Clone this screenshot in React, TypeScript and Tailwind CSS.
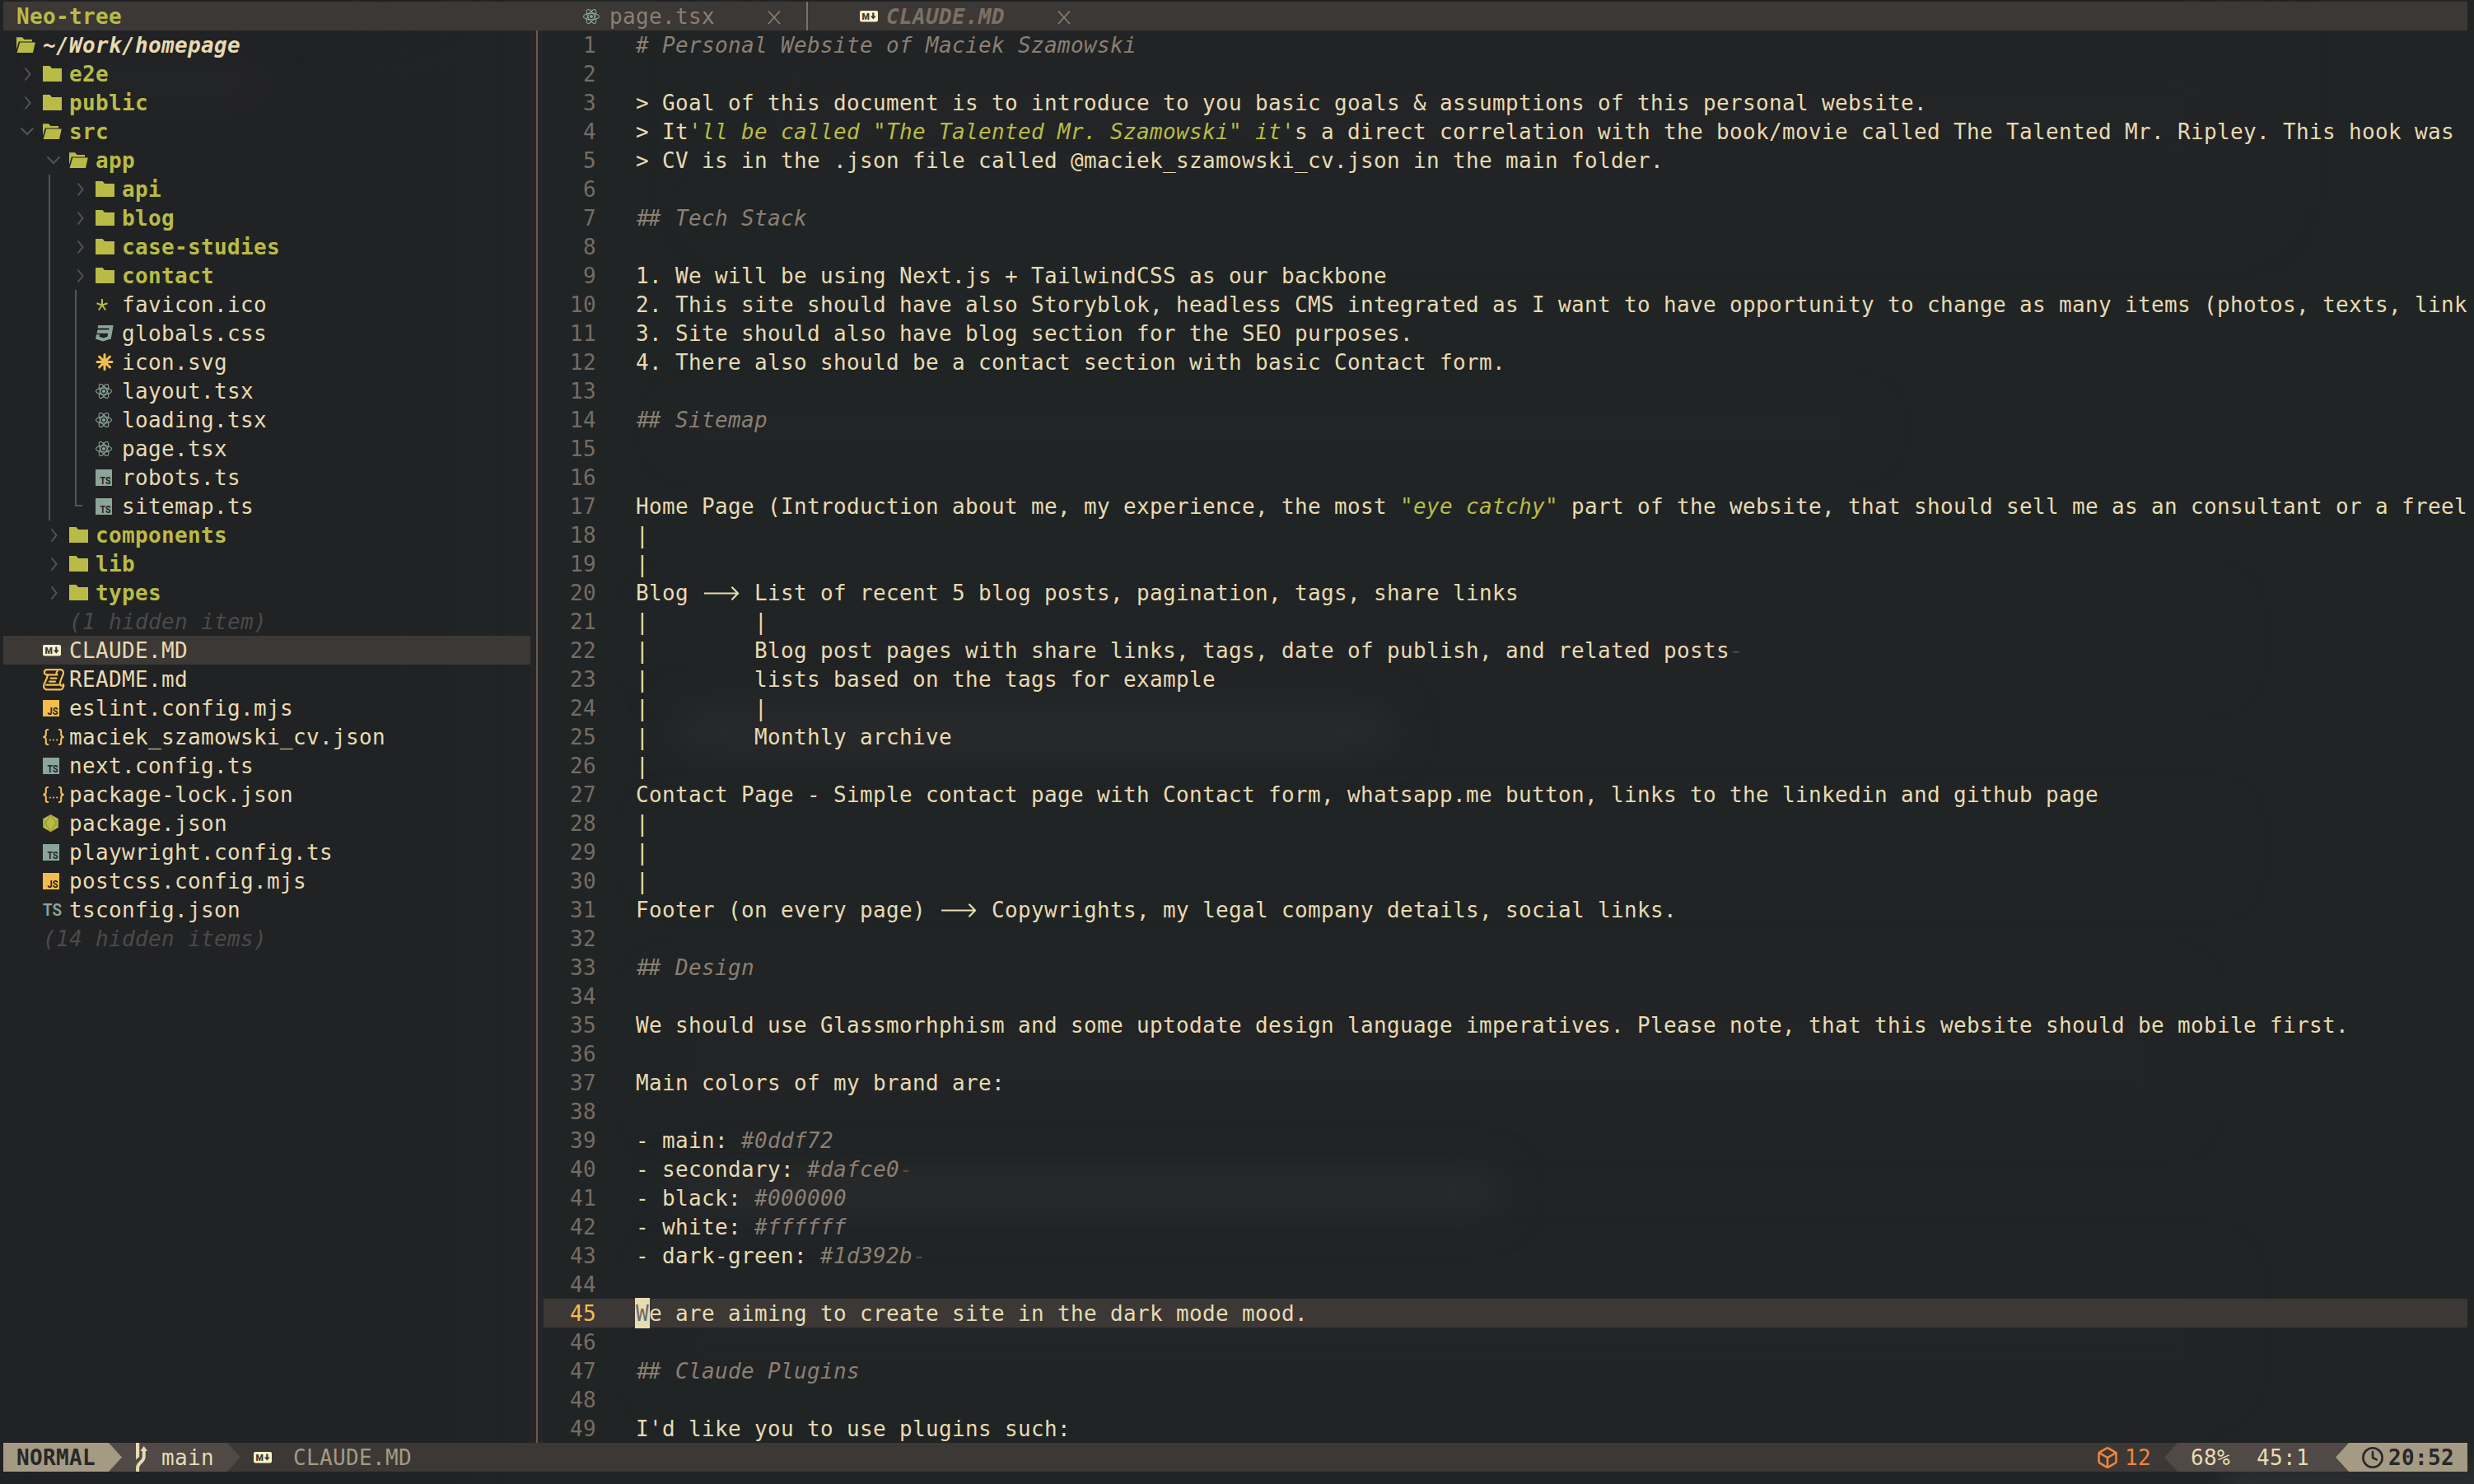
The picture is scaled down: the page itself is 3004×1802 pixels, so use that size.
import type { ReactNode } from 'react'
import { Box, Clock } from 'lucide-react'

// Every icon is drawn in a 32x35 frame: two terminal cells wide, one row high
function Glyph({ className = '', children }: { className?: string; children: ReactNode }) {
  return (
    <svg viewBox="0 0 32 35" className={`h-[35px] w-8 shrink-0 ${className}`} fill="currentColor">
      {children}
    </svg>
  )
}

function Folder() {
  return (
    <Glyph className="text-[#b9bb46]">
      <path d="M0 8h8.5l2.5 3h12v16H0z" />
    </Glyph>
  )
}

function FolderOpen() {
  return (
    <Glyph className="text-[#b9bb46]">
      <path d="M0 8.2h7l2.6 2.8h9.4v2.4H2.8L0 23z" />
      <path d="M4.2 14.6h18.6L20 27H0.6z" />
    </Glyph>
  )
}

function ChevronRight() {
  return (
    <Glyph className="text-[#555454]">
      <path d="M10.5 10.5l6 7.5-6 7.5" fill="none" stroke="currentColor" strokeWidth="2" />
    </Glyph>
  )
}

function ChevronDown() {
  return (
    <Glyph className="text-[#555454]">
      <path d="M5.5 13.5l7.5 7.5 7.5-7.5" fill="none" stroke="currentColor" strokeWidth="2" />
    </Glyph>
  )
}

function ReactIcon() {
  return (
    <Glyph className="text-[#8ba598]">
      <g fill="none" stroke="currentColor" strokeWidth="1.1">
        <ellipse cx="10" cy="18" rx="9.5" ry="3.9" />
        <ellipse cx="10" cy="18" rx="9.5" ry="3.9" transform="rotate(60 10 18)" />
        <ellipse cx="10" cy="18" rx="9.5" ry="3.9" transform="rotate(120 10 18)" />
      </g>
      <circle cx="10" cy="18" r="2" />
    </Glyph>
  )
}

function SquareIcon({ label, className }: { label: string; className: string }) {
  return (
    <Glyph className={className}>
      <rect x="0" y="8" width="20" height="20" />
      <text x="5.5" y="26.3" textLength="13" lengthAdjust="spacingAndGlyphs" fill="#212224" className="font-['Roboto',sans-serif] text-[12.5px] font-bold tracking-normal">
        {label}
      </text>
    </Glyph>
  )
}

function MarkdownIcon() {
  return (
    <Glyph className="text-[#fbf0c9]">
      <rect x="0" y="11" width="22" height="13.4" rx="1.8" />
      <text x="2.6" y="21.8" textLength="9.4" lengthAdjust="spacingAndGlyphs" fill="#3c3836" className="font-['Roboto',sans-serif] text-[11.5px] font-black tracking-normal">
        M
      </text>
      <path d="M15.2 13.6h2.2v4h2.4l-3.5 4-3.5-4h2.4z" fill="#3c3836" />
    </Glyph>
  )
}

function ScrollIcon() {
  return (
    <Glyph className="text-[#f2bd4f]">
      <g fill="none" stroke="currentColor" strokeWidth="2.2" strokeLinecap="round" strokeLinejoin="round">
        <path d="M4.5 12.4a3.2 3.2 0 0 1 0-6.3h17.3c4 1 3.4 4.6 2.4 6.9-2.2 5-3.9 8.3-3.2 11.4 1 1.9 3.4 1.3 4-.4.9 3-1 6.2-3.6 6.4H4.2c-3.6-.9-3.5-4.5-2.4-7.2 1.7-4 4.1-7.4 4-10.8z" />
        <path d="M5.5 12.4h12c-1.5-1.5-1.2-3.5.3-4.5M4 24.6h15" />
        <path d="M9.5 16.6h7M8 20.6h7" />
      </g>
    </Glyph>
  )
}

function JsonIcon() {
  return (
    <Glyph className="text-[#f2bd4f]">
      <g fill="none" stroke="currentColor" strokeWidth="2.1">
        <path d="M7 9H5.8C4.2 9 3.8 10 3.8 11.2v3.6C3.8 17 2.6 18 .3 18c2.3 0 3.5 1 3.5 3.2v3.6c0 1.2.4 2.2 2 2.2H7" />
        <path d="M19 9h1.2c1.6 0 2 1 2 2.2v3.6c0 2.2 1.2 3.2 3.5 3.2-2.3 0-3.5 1-3.5 3.2v3.6c0 1.2-.4 2.2-2 2.2H19" />
      </g>
      <circle cx="8.8" cy="21.5" r="1.1" />
      <circle cx="13" cy="21.5" r="1.1" />
      <circle cx="17.2" cy="21.5" r="1.1" />
    </Glyph>
  )
}

function NodeIcon() {
  return (
    <Glyph className="text-[#b9bb46]">
      <path d="M9.5 7l9.3 5.3v10.5L9.5 28.2.2 22.8V12.3z" />
      <path d="M9.5 7L2.5 17.5l7 10.7 7-10.7zM.2 12.3l9.3 15.9M18.8 12.3L9.5 28.2M.2 22.8L9.5 7l9.3 15.8" fill="none" stroke="#8c8f35" strokeWidth=".7" />
    </Glyph>
  )
}

function SunIcon() {
  return (
    <Glyph className="text-[#f2bd4f]">
      <g stroke="currentColor" strokeWidth="3" strokeLinecap="round">
        <path d="M11 8.5v18M2 17.5h18M4.5 11l13 13M17.5 11l-13 13" />
      </g>
      <circle cx="11" cy="17.5" r="4.5" />
    </Glyph>
  )
}

function StarIcon() {
  return (
    <Glyph className="text-[#b9bb46]">
      <path d="M8 11v7.5M8 18.5l-6.5-2.3M8 18.5l6.5-2.3M8 18.5l-4.2 6M8 18.5l4.2 6" fill="none" stroke="currentColor" strokeWidth="2" />
    </Glyph>
  )
}

function CssIcon() {
  return (
    <Glyph className="text-[#8ba598]">
      <path d="M3.2 8h18.5l-3 16.4L9 27.6 0 24.4l1-5.2h4l-.5 2.6 5 1.8 5-1.8.8-4H1.6l.8-4.2h13.8l.3-2H2.5z" />
    </Glyph>
  )
}

function TsTextIcon() {
  return (
    <Glyph className="text-[#8ba598]">
      <text x="0" y="25" textLength="23" lengthAdjust="spacingAndGlyphs" className="font-['Roboto',sans-serif] text-[20px] font-semibold tracking-normal">
        TS
      </text>
    </Glyph>
  )
}

const icons: Record<string, ReactNode> = {
  ico: <StarIcon />,
  css: <CssIcon />,
  svg: <SunIcon />,
  react: <ReactIcon />,
  ts: <SquareIcon label="TS" className="text-[#8ba598]" />,
  js: <SquareIcon label="JS" className="text-[#f2bd4f]" />,
  md: <MarkdownIcon />,
  readme: <ScrollIcon />,
  json: <JsonIcon />,
  node: <NodeIcon />,
  tstext: <TsTextIcon />,
}

type Node = {
  name: string
  depth: number
  kind: 'dir' | 'open' | 'file' | 'hidden'
  icon?: string
  guides?: ('line' | 'end')[]
  selected?: boolean
}

const tree: Node[] = [
  { name: 'e2e', depth: 0, kind: 'dir' },
  { name: 'public', depth: 0, kind: 'dir' },
  { name: 'src', depth: 0, kind: 'open' },
  { name: 'app', depth: 1, kind: 'open' },
  { name: 'api', depth: 2, kind: 'dir', guides: ['line'] },
  { name: 'blog', depth: 2, kind: 'dir', guides: ['line'] },
  { name: 'case-studies', depth: 2, kind: 'dir', guides: ['line'] },
  { name: 'contact', depth: 2, kind: 'dir', guides: ['line'] },
  { name: 'favicon.ico', depth: 2, kind: 'file', icon: 'ico', guides: ['line', 'line'] },
  { name: 'globals.css', depth: 2, kind: 'file', icon: 'css', guides: ['line', 'line'] },
  { name: 'icon.svg', depth: 2, kind: 'file', icon: 'svg', guides: ['line', 'line'] },
  { name: 'layout.tsx', depth: 2, kind: 'file', icon: 'react', guides: ['line', 'line'] },
  { name: 'loading.tsx', depth: 2, kind: 'file', icon: 'react', guides: ['line', 'line'] },
  { name: 'page.tsx', depth: 2, kind: 'file', icon: 'react', guides: ['line', 'line'] },
  { name: 'robots.ts', depth: 2, kind: 'file', icon: 'ts', guides: ['line', 'line'] },
  { name: 'sitemap.ts', depth: 2, kind: 'file', icon: 'ts', guides: ['line', 'end'] },
  { name: 'components', depth: 1, kind: 'dir' },
  { name: 'lib', depth: 1, kind: 'dir' },
  { name: 'types', depth: 1, kind: 'dir' },
  { name: '(1 hidden item)', depth: 1, kind: 'hidden' },
  { name: 'CLAUDE.MD', depth: 0, kind: 'file', icon: 'md', selected: true },
  { name: 'README.md', depth: 0, kind: 'file', icon: 'readme' },
  { name: 'eslint.config.mjs', depth: 0, kind: 'file', icon: 'js' },
  { name: 'maciek_szamowski_cv.json', depth: 0, kind: 'file', icon: 'json' },
  { name: 'next.config.ts', depth: 0, kind: 'file', icon: 'ts' },
  { name: 'package-lock.json', depth: 0, kind: 'file', icon: 'json' },
  { name: 'package.json', depth: 0, kind: 'file', icon: 'node' },
  { name: 'playwright.config.ts', depth: 0, kind: 'file', icon: 'ts' },
  { name: 'postcss.config.mjs', depth: 0, kind: 'file', icon: 'js' },
  { name: 'tsconfig.json', depth: 0, kind: 'file', icon: 'tstext' },
  { name: '(14 hidden items)', depth: 0, kind: 'hidden' },
]

function Guide({ type }: { type?: 'line' | 'end' }) {
  return (
    <Glyph className="text-[#555454]">
      {type === 'line' && <rect x="7" y="0" width="2" height="35" />}
      {type === 'end' && <path d="M7 0h2v16h7v2H7z" />}
    </Glyph>
  )
}

function TreeRow({ node }: { node: Node }) {
  const guides = node.guides ?? []
  const isDir = node.kind === 'dir' || node.kind === 'open'
  // the chevron takes the slot just before the icon, guides take the ones before it
  const slots = isDir ? node.depth : node.depth + 1
  return (
    <div className={`flex h-[35px] pl-4 ${node.selected ? 'bg-[#3c3836]' : ''}`}>
      {Array.from({ length: slots }, (_, i) => (
        <Guide key={i} type={guides[i - 1]} />
      ))}
      {node.kind === 'dir' && <ChevronRight />}
      {node.kind === 'open' && <ChevronDown />}
      {node.kind === 'dir' && <Folder />}
      {node.kind === 'open' && <FolderOpen />}
      {node.icon && icons[node.icon]}
      <span className={isDir ? 'font-bold text-[#b9bb46]' : node.kind === 'hidden' ? 'italic text-[#4b4a4a]' : ''}>{node.name}</span>
    </div>
  )
}

const Comment = ({ children }: { children: ReactNode }) => <span className="italic text-[#8b7f72]">{children}</span>
const Str = ({ children }: { children: ReactNode }) => <span className="italic text-[#b9bb46]">{children}</span>
const Trail = () => <span className="text-[#504945]">-</span>

function Heading({ children }: { children: ReactNode }) {
  return (
    <Comment>
      <span className="inline-block w-8 pl-px tracking-[-2px]">##</span> {children}
    </Comment>
  )
}

function Arrow() {
  return (
    <svg viewBox="0 0 48 35" className="inline-block h-[35px] w-12 align-top" fill="none" stroke="currentColor" strokeWidth="2.2">
      <path d="M3 18.5h41M36.5 10.8l7.5 7.7-7.5 7.7" />
    </svg>
  )
}

const lines: ReactNode[] = [
  <Comment># Personal Website of Maciek Szamowski</Comment>,
  '',
  '> Goal of this document is to introduce to you basic goals & assumptions of this personal website.',
  <>{'> It'}<Str>{`'ll be called "The Talented Mr. Szamowski" it'`}</Str>s a direct correlation with the book/movie called The Talented Mr. Ripley. This hook was</>,
  '> CV is in the .json file called @maciek_szamowski_cv.json in the main folder.',
  '',
  <Heading>Tech Stack</Heading>,
  '',
  '1. We will be using Next.js + TailwindCSS as our backbone',
  '2. This site should have also Storyblok, headless CMS integrated as I want to have opportunity to change as many items (photos, texts, link',
  '3. Site should also have blog section for the SEO purposes.',
  '4. There also should be a contact section with basic Contact form.',
  '',
  <Heading>Sitemap</Heading>,
  '',
  '',
  <>Home Page (Introduction about me, my experience, the most <Str>"eye catchy"</Str> part of the website, that should sell me as an consultant or a freel</>,
  '|',
  '|',
  <>Blog <Arrow /> List of recent 5 blog posts, pagination, tags, share links</>,
  '|        |',
  <>{'|        Blog post pages with share links, tags, date of publish, and related posts'}<Trail /></>,
  '|        lists based on the tags for example',
  '|        |',
  '|        Monthly archive',
  '|',
  'Contact Page - Simple contact page with Contact form, whatsapp.me button, links to the linkedin and github page',
  '|',
  '|',
  '|',
  <>Footer (on every page) <Arrow /> Copywrights, my legal company details, social links.</>,
  '',
  <Heading>Design</Heading>,
  '',
  'We should use Glassmorhphism and some uptodate design language imperatives. Please note, that this website should be mobile first.',
  '',
  'Main colors of my brand are:',
  '',
  <>- main: <Comment>#0ddf72</Comment></>,
  <>- secondary: <Comment>#dafce0</Comment><Trail /></>,
  <>- black: <Comment>#000000</Comment></>,
  <>- white: <Comment>#ffffff</Comment></>,
  <>- dark-green: <Comment>#1d392b</Comment><Trail /></>,
  '',
  <><span className="inline-block h-[35px] w-4 bg-[#e8dab2] align-top text-[#6c6b68] outline outline-[#e8dab2]">W</span>e are aiming to create site in the dark mode mood.</>,
  '',
  <Heading>Claude Plugins</Heading>,
  '',
  "I'd like you to use plugins such:",
]

const CURRENT_LINE = 45

function CloseIcon() {
  return (
    <svg viewBox="0 0 16 35" className="h-[35px] w-4 shrink-0" fill="none" stroke="#8b7f72" strokeWidth="1.7">
      <path d="M1 11.5l14 15.5M15 11.5L1 27" />
    </svg>
  )
}

function Separator({ left, className }: { left?: boolean; className: string }) {
  return (
    <svg viewBox="0 0 16 35" preserveAspectRatio="none" className={`h-[35px] w-4 shrink-0 ${className}`} fill="currentColor">
      <path d={left ? 'M16 0v35L0 17.5z' : 'M0 0v35l16-17.5z'} />
    </svg>
  )
}

function BranchIcon() {
  return (
    <Glyph className="text-[#e8dab2]">
      <path d="M1 0h4.2v17l-4.2 3.5z" />
      <path d="M3.1 35v-5c0-6 7.6-6.5 7.6-13V8" fill="none" stroke="currentColor" strokeWidth="4" />
      <path d="M10.7 4l4.3 6H6.4z" />
    </Glyph>
  )
}

// Faint shapes of the window behind the translucent terminal
function Backdrop() {
  return (
    <div className="absolute inset-0 -z-10 overflow-hidden bg-[#202425]">
      <div className="absolute -left-10 top-0 h-[1900px] w-[560px] bg-[#212224] blur-2xl" />
      <div className="absolute left-[880px] top-[30px] h-[220px] w-[1850px] bg-[#222426] blur-2xl" />
      <div className="absolute left-[60px] top-[80px] h-[40px] w-[260px] rounded-full bg-[#252628] blur-xl" />
      <div className="absolute left-[820px] top-[500px] h-[40px] w-[1450px] rounded-full bg-[#242527] blur-xl" />
      <div className="absolute left-[800px] top-[730px] h-[90px] w-[1900px] bg-[#222426] blur-xl" />
      <div className="absolute left-[815px] top-[858px] h-[54px] w-[880px] rounded-full bg-[#292a2c] blur-xl" />
      <div className="absolute left-[800px] top-[990px] h-[80px] w-[1900px] bg-[#222426] blur-xl" />
      <div className="absolute left-[800px] top-[1190px] h-[170px] w-[1850px] bg-[#222426] blur-xl" />
      <div className="absolute left-[815px] top-[1421px] h-[54px] w-[1010px] rounded-full bg-[#292a2c] blur-xl" />
      <div className="absolute left-[800px] top-[1535px] h-[150px] w-[1900px] bg-[#222426] blur-xl" />
      <div className="absolute left-[2700px] top-[1775px] h-[60px] w-[340px] bg-[#2b2c2e] blur-lg" />
    </div>
  )
}

export default function App() {
  return (
    <div className="relative isolate h-[1802px] w-[3004px] overflow-hidden whitespace-pre pl-1 pr-2 pt-0.5 font-['DejaVu_Sans_Mono',monospace] text-[26px] leading-[37px] tracking-[0.347px] text-[#e8dab2]">
      <Backdrop />

      <header className="flex h-[35px] bg-[#3c3836]">
        <div className="w-[704px] pl-4 font-bold text-[#b9bb46]">Neo-tree</div>
        <div className="flex w-[271px] text-[#8b7f72]">
          <ReactIcon />
          <span className="w-[192px]">page.tsx</span>
          <CloseIcon />
        </div>
        <div className="flex border-l-2 border-[#7c6f64] pl-[63px] text-[#7c7065]">
          <MarkdownIcon />
          <span className="w-[208px] font-bold italic">CLAUDE.MD</span>
          <CloseIcon />
        </div>
      </header>

      <main className="flex h-[1715px]">
        <aside className="w-[640px]">
          <div className="flex h-[35px] pl-4">
            <FolderOpen />
            <span className="font-bold italic">~/Work/homepage</span>
          </div>
          {tree.map((node) => (
            <TreeRow key={node.name} node={node} />
          ))}
        </aside>
        <div className="flex w-4 justify-center bg-[#272626]">
          <div className="w-0.5 bg-[#665c54]" />
        </div>
        <section className="min-w-0 flex-1">
          {lines.map((line, i) => (
            <div key={i} className={`flex h-[35px] ${i + 1 === CURRENT_LINE ? 'bg-[#3c3836]' : ''}`}>
              <span className={`w-16 shrink-0 text-right ${i + 1 === CURRENT_LINE ? 'text-[#f2bd4f]' : 'text-[#776c62]'}`}>{i + 1}</span>
              <span className="ml-12">{line}</span>
            </div>
          ))}
        </section>
      </main>

      <footer className="flex h-[35px] bg-[#3c3836]">
        <div className="w-32 bg-[#a59a84] pl-4 font-bold text-[#282828]">NORMAL</div>
        <Separator className="bg-[#504945] text-[#a59a84]" />
        <div className="flex w-32 bg-[#504945] pl-4">
          <BranchIcon />
          main
        </div>
        <Separator className="text-[#504945]" />
        <div className="flex flex-1 pl-4 text-[#a59a84]">
          <MarkdownIcon />
          <span className="pl-4">CLAUDE.MD</span>
        </div>
        <div className="flex w-[83px] text-[#ee8639]">
          <Box className="mr-[7px] mt-1 h-[28px] w-[28px]" strokeWidth={2.2} />
          12
        </div>
        <Separator left className="text-[#504945]" />
        <div className="flex w-48 gap-8 bg-[#504945] pl-4">
          <span>68%</span>
          <span>45:1</span>
        </div>
        <Separator left className="bg-[#504945] text-[#a59a84]" />
        <div className="flex w-36 bg-[#a59a84] pl-[15px] font-bold text-[#282828]">
          <Clock className="mr-[5px] mt-1 h-[28px] w-[28px]" strokeWidth={2.2} />
          20:52
        </div>
      </footer>
    </div>
  )
}
